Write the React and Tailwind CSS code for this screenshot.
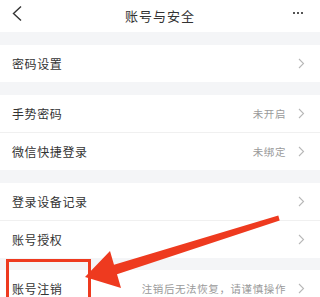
import React from "react";

const font = { fontFamily: '"Noto Sans CJK SC", "Noto Sans", sans-serif' };

function Chevron() {
  return (
    <svg width="7" height="11" viewBox="0 0 7 11" className="shrink-0">
      <path d="M1 1 L5.5 5.5 L1 10" fill="none" stroke="#b8b8b8" strokeWidth="1.1" />
    </svg>
  );
}

function Row({ label, value }) {
  return (
    <div className="flex h-[37px] items-center bg-white pl-[12px] pr-[15px]">
      <span className="text-[12px] tracking-[0.6px] text-[#333]">{label}</span>
      <div className="ml-auto flex items-center gap-[12px]">
        {value && <span className="text-[10.5px] tracking-[0.6px] text-[#9a9a9a]">{value}</span>}
        <Chevron />
      </div>
    </div>
  );
}

function Gap({ h = "h-[13px]" }) {
  return <div className={`${h} bg-[#f4f5f7]`} />;
}

function Divider() {
  return <div className="h-px bg-[#f0f0f0]" />;
}

export default function App() {
  return (
    <div className="relative h-[297px] w-[320px] overflow-hidden bg-white" style={font}>
      <div className="relative flex h-[32px] items-center justify-center bg-white">
        <svg width="12" height="18" viewBox="0 0 12 18" className="absolute left-[11px] top-[5px]">
          <path d="M10 1.5 L2.5 8.5 L10 15.5" fill="none" stroke="#333" strokeWidth="1.4" />
        </svg>
        <span className="text-[13px] tracking-[1px] text-[#333]">账号与安全</span>
        <div className="absolute right-[17px] top-[12px] flex gap-[2px]">
          <span className="h-[2px] w-[2px] bg-[#555]" />
          <span className="h-[2px] w-[2px] bg-[#555]" />
          <span className="h-[2px] w-[2px] bg-[#555]" />
        </div>
      </div>
      <Gap />
      <Row label="密码设置" />
      <Gap />
      <Row label="手势密码" value="未开启" />
      <Divider />
      <Row label="微信快捷登录" value="未绑定" />
      <Gap />
      <Row label="登录设备记录" />
      <Divider />
      <Row label="账号授权" />
      <Gap h="h-[12px]" />
      <Row label="账号注销" value="注销后无法恢复，请谨慎操作" />

      <svg className="pointer-events-none absolute left-0 top-0" width="320" height="297" viewBox="0 0 320 297">
        <rect x="7.5" y="260.5" width="82" height="50" fill="none" stroke="#ee3a1f" strokeWidth="3" />
        <polygon
          points="278.3,215.6 114,264.7 110,251 85,277 121,288 117,274.3 279.7,220.4"
          fill="#ee3a1f"
          strokeLinejoin="round"
        />
      </svg>
    </div>
  );
}
